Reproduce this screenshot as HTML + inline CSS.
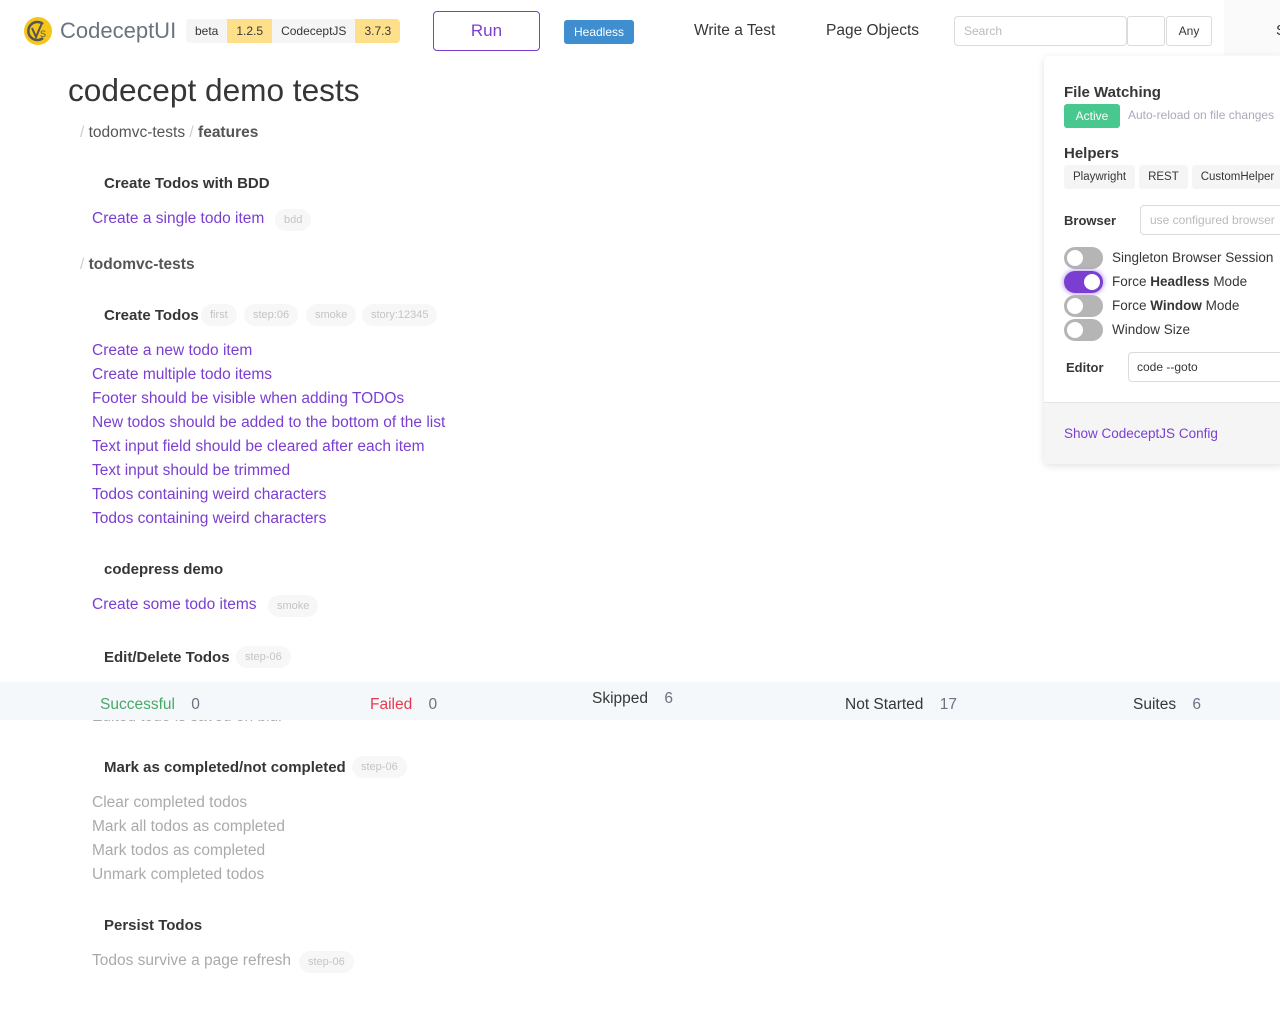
<!DOCTYPE html>
<html><head><meta charset="utf-8"><style>
*{box-sizing:border-box;margin:0;padding:0}
body{width:1280px;height:1014px;background:#fff;font-family:"Liberation Sans","DejaVu Sans",sans-serif;color:#363636;position:relative;overflow:hidden}
.a{position:absolute;white-space:nowrap}
.tag{position:absolute;background:#f7f7f7;color:#c4c4c4;font-size:11px;border-radius:12px;height:22px;line-height:22px;padding:0 9px}
.link{position:absolute;color:#7a3fd1;font-size:15.5px;white-space:nowrap}
.grey{position:absolute;color:#aaa;font-size:15.5px;white-space:nowrap}
.suite{position:absolute;font-size:15px;color:#363636;font-weight:bold;white-space:nowrap}
.tg{position:absolute;width:39px;height:22px;border-radius:11px;background:#b5b5b5}
.tg::after{content:"";position:absolute;left:3px;top:3px;width:16px;height:16px;border-radius:50%;background:#fff}
.tg.on{background:#7a3fd1;box-shadow:0 0 6px #a07ae0}
.tg.on::after{left:20px}
</style></head><body>
<svg class="a" style="left:23px;top:16px" width="30" height="30" viewBox="0 0 30 30"><circle cx="15" cy="15" r="14" fill="#f5c518"/><path d="M20 8a9 9 0 1 0 0 14" stroke="#555" stroke-width="2.5" fill="none"/><path d="M9 12l4 9 6-14" stroke="#555" stroke-width="2" fill="none"/><text x="17" y="21" font-size="9" fill="#555" font-family="Liberation Sans">S</text></svg>
<div class="a" style="left:60px;top:18px;font-size:22px;color:#6b7380">CodeceptUI</div>
<div class="a" style="left:186px;top:19px;height:24px;font-size:12px;line-height:24px;display:flex;border-radius:4px;overflow:hidden">
<span style="background:#f5f5f5;padding:0 9px">beta</span><span style="background:#ffe08a;padding:0 9px">1.2.5</span><span style="background:#f5f5f5;padding:0 9px">CodeceptJS</span><span style="background:#ffe08a;padding:0 9px">3.7.3</span></div>
<div class="a" style="left:433px;top:11px;width:107px;height:40px;border:1px solid #7a3fd1;border-radius:4px;color:#7a3fd1;font-size:17px;text-align:center;line-height:38px">Run</div>
<div class="a" style="left:564px;top:20px;width:70px;height:24px;background:#3e8ed0;border-radius:3px;color:#fff;font-size:12px;text-align:center;line-height:24px">Headless</div>
<div class="a" style="left:694px;top:22px;font-size:15.5px">Write a Test</div>
<div class="a" style="left:826px;top:22px;font-size:15.5px">Page Objects</div>
<div class="a" style="left:954px;top:16px;width:173px;height:30px;border:1px solid #dbdbdb;border-radius:4px;color:#bbb;font-size:12px;padding:7px 9px">Search</div>
<div class="a" style="left:1127px;top:16px;width:38px;height:30px;border:1px solid #dbdbdb;border-radius:3px"></div>
<div class="a" style="left:1166px;top:16px;width:46px;height:30px;border:1px solid #dbdbdb;border-radius:3px;font-size:12px;text-align:center;line-height:28px">Any</div>
<div class="a" style="left:1224px;top:0;width:56px;height:55px;background:#fafafa"></div>
<div class="a" style="left:1276px;top:22px;font-size:15px">S</div>
<div class="a" style="left:68px;top:72px;font-size:31.6px;color:#363636">codecept demo tests</div>
<div class="a" style="left:80px;top:124px;font-size:15.5px;color:#555"><span style="color:#ccc">/ </span>todomvc-tests <span style="color:#ccc">/</span> <b>features</b></div>
<div class="suite" style="left:104px;top:175px">Create Todos with BDD</div>
<div class="link" style="left:92px;top:210px">Create a single todo item</div><div class="tag" style="left:275px;top:209px">bdd</div>
<div class="a" style="left:80px;top:256px;font-size:15.5px;color:#555;font-weight:bold"><span style="color:#ccc;font-weight:normal">/ </span>todomvc-tests</div>
<div class="suite" style="left:104px;top:307px">Create Todos</div>
<div class="tag" style="left:201px;top:304px">first</div><div class="tag" style="left:244px;top:304px">step:06</div><div class="tag" style="left:306px;top:304px">smoke</div><div class="tag" style="left:362px;top:304px">story:12345</div>
<div class="link" style="left:92px;top:342px">Create a new todo item</div>
<div class="link" style="left:92px;top:366px">Create multiple todo items</div>
<div class="link" style="left:92px;top:390px">Footer should be visible when adding TODOs</div>
<div class="link" style="left:92px;top:414px">New todos should be added to the bottom of the list</div>
<div class="link" style="left:92px;top:438px">Text input field should be cleared after each item</div>
<div class="link" style="left:92px;top:462px">Text input should be trimmed</div>
<div class="link" style="left:92px;top:486px">Todos containing weird characters</div>
<div class="link" style="left:92px;top:510px">Todos containing weird characters</div>
<div class="suite" style="left:104px;top:561px">codepress demo</div>
<div class="link" style="left:92px;top:596px">Create some todo items</div><div class="tag" style="left:268px;top:595px">smoke</div>
<div class="suite" style="left:104px;top:649px">Edit/Delete Todos</div><div class="tag" style="left:236px;top:646px">step-06</div>
<div class="grey" style="left:92px;top:708px">Edited todo is saved on blur</div>
<div class="a" style="left:0;top:682px;width:1280px;height:38px;background:#f5f8fb"></div>
<div class="a" style="left:100px;top:696px;font-size:15.5px;color:#48a868">Successful <span style="color:#6b7380;margin-left:12px">0</span></div>
<div class="a" style="left:370px;top:696px;font-size:15.5px;color:#e8384f">Failed <span style="color:#6b7380;margin-left:12px">0</span></div>
<div class="a" style="left:592px;top:690px;font-size:15.5px">Skipped <span style="color:#6b7380;margin-left:12px">6</span></div>
<div class="a" style="left:845px;top:696px;font-size:15.5px">Not Started <span style="color:#6b7380;margin-left:12px">17</span></div>
<div class="a" style="left:1133px;top:696px;font-size:15.5px">Suites <span style="color:#6b7380;margin-left:12px">6</span></div>
<div class="suite" style="left:104px;top:759px">Mark as completed/not completed</div><div class="tag" style="left:352px;top:756px">step-06</div>
<div class="grey" style="left:92px;top:794px">Clear completed todos</div>
<div class="grey" style="left:92px;top:818px">Mark all todos as completed</div>
<div class="grey" style="left:92px;top:842px">Mark todos as completed</div>
<div class="grey" style="left:92px;top:866px">Unmark completed todos</div>
<div class="suite" style="left:104px;top:917px">Persist Todos</div>
<div class="grey" style="left:92px;top:952px">Todos survive a page refresh</div><div class="tag" style="left:299px;top:951px">step-06</div>
<div class="a" style="left:1044px;top:56px;width:240px;height:408px;background:#fff;border-radius:5px;box-shadow:0 2px 8px rgba(0,0,0,.12)"></div>
<div class="a" style="left:1044px;top:402px;width:240px;height:62px;background:#f5f5f5;border-top:1px solid #e5e5e5"></div>
<div class="a" style="left:1064px;top:84px;font-size:15px;font-weight:bold">File Watching</div>
<div class="a" style="left:1064px;top:104px;width:56px;height:24px;background:#48c78e;color:#fff;border-radius:3px;font-size:12px;text-align:center;line-height:24px">Active</div>
<div class="a" style="left:1128px;top:108px;font-size:12px;color:#aab">Auto-reload on file changes</div>
<div class="a" style="left:1064px;top:145px;font-size:15px;font-weight:bold">Helpers</div>
<div class="a" style="left:1064px;top:165px;height:24px;display:flex;gap:4px;font-size:11.5px;line-height:24px">
<span style="background:#f5f5f5;padding:0 9px;border-radius:3px">Playwright</span><span style="background:#f5f5f5;padding:0 9px;border-radius:3px">REST</span><span style="background:#f5f5f5;padding:0 9px;border-radius:3px">CustomHelper</span></div>
<div class="a" style="left:1064px;top:213px;font-size:13px;font-weight:bold">Browser</div>
<div class="a" style="left:1140px;top:205px;width:150px;height:30px;border:1px solid #dbdbdb;border-radius:4px;color:#bbb;font-size:12px;padding:7px 9px">use configured browser</div>
<div class="tg" style="left:1064px;top:247px"></div><div class="a" style="left:1112px;top:250px;font-size:13.5px">Singleton Browser Session</div>
<div class="tg on" style="left:1064px;top:271px"></div><div class="a" style="left:1112px;top:274px;font-size:13.5px">Force <b>Headless</b> Mode</div>
<div class="tg" style="left:1064px;top:295px"></div><div class="a" style="left:1112px;top:298px;font-size:13.5px">Force <b>Window</b> Mode</div>
<div class="tg" style="left:1064px;top:319px"></div><div class="a" style="left:1112px;top:322px;font-size:13.5px">Window Size</div>
<div class="a" style="left:1066px;top:360px;font-size:13px;font-weight:bold">Editor</div>
<div class="a" style="left:1128px;top:352px;width:160px;height:30px;border:1px solid #dbdbdb;border-radius:4px;font-size:12px;padding:7px 8px">code --goto</div>
<div class="a" style="left:1064px;top:426px;font-size:13.5px;color:#7a3fd1">Show CodeceptJS Config</div>
</body></html>
